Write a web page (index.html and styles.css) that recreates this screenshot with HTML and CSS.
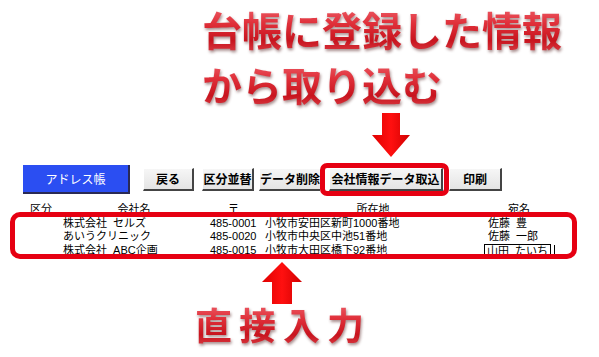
FILE: index.html
```html
<!DOCTYPE html>
<html lang="ja">
<head>
<meta charset="utf-8">
<link rel="stylesheet" href="styles.css">
</head>
<body>
<div class="page">
  <div class="headline">
    <div><span class="glossy">台帳に登録した情報</span></div>
    <div><span class="glossy">から取り込む</span></div>
  </div>
  <svg class="arrow-down" width="38" height="44" viewBox="0 0 38 44">
    <defs>
      <linearGradient id="ag" x1="0" y1="0" x2="1" y2="0">
        <stop offset="0" stop-color="#e00000"/>
        <stop offset="0.5" stop-color="#ff1010"/>
        <stop offset="1" stop-color="#d00000"/>
      </linearGradient>
    </defs>
    <polygon points="10,0 28,0 28,22 38,22 19,44 0,22 10,22" fill="url(#ag)"/>
  </svg>
  <div class="toolbar">
    <div class="btn-main">アドレス帳</div>
    <div class="btn w-back">戻る</div>
    <div class="btn w-sort">区分並替</div>
    <div class="btn w-del">データ削除</div>
    <div class="highlight"><div class="btn w-imp">会社情報データ取込</div></div>
    <div class="btn w-print">印刷</div>
  </div>
  <div class="sheet">
    <div class="row head">
      <div class="c1">区分</div>
      <div class="c2 center">会社名</div>
      <div class="c3 center">〒</div>
      <div class="c4 center">所在地</div>
      <div class="c5 center">宛名</div>
    </div>
    <div class="row">
      <div class="c1"></div>
      <div class="c2">株式会社&nbsp;&nbsp;セルズ</div>
      <div class="c3">485-0001</div>
      <div class="c4">小牧市安田区新町1000番地</div>
      <div class="c5">佐藤&nbsp;&nbsp;豊</div>
    </div>
    <div class="row">
      <div class="c1"></div>
      <div class="c2">あいうクリニック</div>
      <div class="c3">485-0020</div>
      <div class="c4">小牧市中央区中池51番地</div>
      <div class="c5">佐藤&nbsp;&nbsp;一郎</div>
    </div>
    <div class="row">
      <div class="c1"></div>
      <div class="c2">株式会社&nbsp;&nbsp;ABC企画</div>
      <div class="c3">485-0015</div>
      <div class="c4">小牧市大田区橋下92番地</div>
      <div class="c5"><span class="editing">山田&nbsp;&nbsp;たいち</span><span class="caret"></span></div>
    </div>
    <div class="ring"></div>
  </div>
  <svg class="arrow-up" width="40" height="42" viewBox="0 0 40 42">
    <polygon points="20,0 40,20 30,20 30,42 10,42 10,20 0,20" fill="url(#ag)"/>
  </svg>
  <div class="caption"><span class="glossy">直接入力</span></div>
</div>
</body>
</html>
```

FILE: styles.css
```css
html, body {
  margin: 0;
  padding: 0;
  background: #ffffff;
}
.page {
  width: 599px;
  height: 357px;
  overflow: hidden;
  font-family: "Noto Sans CJK JP", "Noto Sans", sans-serif;
  color: #000;
}
.headline,
.caption {
  font-weight: bold;
  filter: drop-shadow(1px 2px 1.5px rgba(60, 0, 0, 0.45));
}
.glossy {
  color: #d7252d;
  background: linear-gradient(#f2707a 0%, #e0303a 40%, #c8141e 70%, #e04a52 100%);
  -webkit-background-clip: text;
  background-clip: text;
  -webkit-text-fill-color: transparent;
}
.headline {
  padding: 0 0 0 202px;
  font-size: 40px;
  line-height: 55px;
  margin-top: 2px;
}
.arrow-down {
  display: block;
  margin: 1px 0 0 372px;
}
.toolbar {
  display: flex;
  align-items: center;
  height: 34px;
  margin-top: 5px;
  padding-left: 23px;
  font-size: 12px;
}
.btn-main {
  width: 105px;
  height: 27px;
  background: #2b4ef2;
  color: #fff;
  display: flex;
  align-items: center;
  justify-content: center;
  border-right: 2px solid #2a2a55;
  border-bottom: 2px solid #2a2a55;
  margin-right: 13px;
}
.btn {
  box-sizing: border-box;
  display: flex;
  align-items: center;
  justify-content: center;
  font-weight: bold;
  background: linear-gradient(#f6f6f6, #e4e4e4);
  border-top: 1px solid #ffffff;
  border-left: 1px solid #ffffff;
  border-right: 2px solid #444;
  border-bottom: 2px solid #444;
  height: 23px;
}
.w-back { width: 51px; margin-right: 8px; }
.w-sort { width: 52px; margin-right: 5px; }
.w-del { width: 61px; border-right: none; }
.highlight {
  width: 129px;
  height: 33px;
  box-sizing: border-box;
  border: 5px solid #e60012;
  border-radius: 7px;
  display: flex;
  align-items: center;
  padding-left: 4px;
}
.w-imp { width: 114px; }
.w-print { width: 53px; }
.sheet {
  position: relative;
  margin-top: 7px;
  font-family: "Liberation Sans", "Noto Sans CJK JP", sans-serif;
  font-size: 11px;
  line-height: 13.5px;
}
.row {
  display: grid;
  grid-template-columns: 43px 142px 57px 222px 80px;
  padding-left: 20px;
  height: 13.5px;
  white-space: nowrap;
}
.c1 { padding-left: 10px; }
.c3 { padding-left: 5px; }
.c4 { padding-left: 3px; }
.c5 { padding-left: 4px; }
.center { text-align: center; padding-left: 0; }
.head .c5 { padding-right: 10px; }
.editing {
  display: inline-block;
  border: 1px solid #000;
  margin-left: -4px;
  padding: 0 2px 0 2px;
  line-height: 12px;
}
.caret {
  display: inline-block;
  width: 3px;
  height: 12px;
  border-right: 1px solid #000;
  vertical-align: top;
  position: relative;
  top: 1px;
}
.caret::after {
  content: "";
  position: absolute;
  right: -2px;
  bottom: -1px;
  width: 2px;
  height: 2px;
  background: #000;
}
.ring {
  position: absolute;
  left: 10px;
  top: 9px;
  width: 567px;
  height: 47px;
  box-sizing: border-box;
  border: 5px solid #e60012;
  border-radius: 10px;
}
.arrow-up {
  display: block;
  margin: 5px 0 0 262px;
}
.caption {
  padding-left: 195px;
  font-size: 37px;
  letter-spacing: 7px;
  line-height: 44px;
  margin-top: -2px;
}
```
